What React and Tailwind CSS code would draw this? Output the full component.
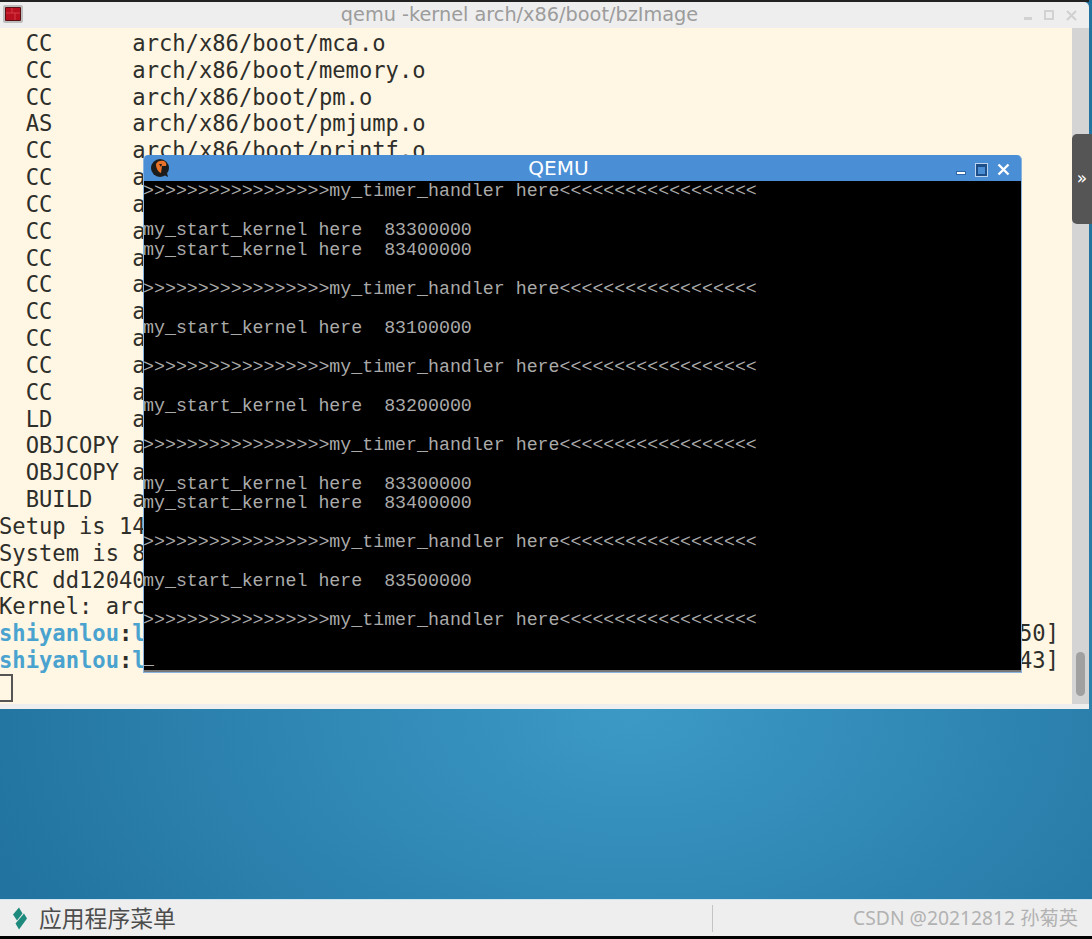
const T = ">".repeat(17) + "my_timer_handler here" + "<".repeat(18);
const S = (n) => "my_start_kernel here  " + n;
const qemuLines = [T,"",S(83300000),S(83400000),"",T,"",S(83100000),"",T,"",S(83200000),"",T,"",S(83300000),S(83400000),"",T,"",S(83500000),"",T,"","_"];

const termLines = [
  "  CC      arch/x86/boot/mca.o",
  "  CC      arch/x86/boot/memory.o",
  "  CC      arch/x86/boot/pm.o",
  "  AS      arch/x86/boot/pmjump.o",
  "  CC      arch/x86/boot/printf.o",
  "  CC      arch/x86/boot/regs.o",
  "  CC      arch/x86/boot/string.o",
  "  CC      arch/x86/boot/tty.o",
  "  CC      arch/x86/boot/video.o",
  "  CC      arch/x86/boot/video-mode.o",
  "  CC      arch/x86/boot/version.o",
  "  CC      arch/x86/boot/video-vga.o",
  "  CC      arch/x86/boot/video-vesa.o",
  "  CC      arch/x86/boot/video-bios.o",
  "  LD      arch/x86/boot/setup.elf",
  "  OBJCOPY arch/x86/boot/setup.bin",
  "  OBJCOPY arch/x86/boot/vmlinux.bin",
  "  BUILD   arch/x86/boot/bzImage",
  "Setup is 14364 bytes (padded to 14848 bytes).",
  "System is 8 kB",
  "CRC dd120400",
  "Kernel: arch/x86/boot/bzImage is ready",
];

function Prompt({ end }) {
  return (
    <div className="flex justify-between h-[26.83px] pr-[13px]">
      <span><span className="font-bold text-[#4aa3cf]">shiyanlou</span><span className="font-bold">:</span><span className="font-bold text-[#4aa3cf]">l</span></span>
      <span>{end}</span>
    </div>
  );
}

export default function App() {
  return (
    <div className="relative w-[1092px] h-[939px] overflow-hidden flex flex-col bg-[radial-gradient(ellipse_680px_420px_at_58%_76%,#3c99c6,#22739f)]">
      <div className="h-[2px] bg-[#222] w-[1089px]" />
      <div className="w-[1089px] h-[707px] flex flex-col bg-[#eeeeee] rounded-tr-[5px] shrink-0">
        <div className="h-[26px] flex items-center relative shrink-0 justify-center pr-[50px] text-[19.3px] text-[#9c9c9c] font-['DejaVu_Sans',sans-serif]">
          <svg className="absolute left-[3px] top-[3px]" width="20" height="18" viewBox="0 0 20 18">
            <rect x="0" y="0" width="20" height="18" rx="2" fill="#bdbdbd" />
            <rect x="2" y="2" width="16" height="14" rx="1" fill="#5a1014" />
            <rect x="3" y="3" width="14" height="12" fill="#b8101e" />
            <path d="M3 8h14M9 3v5M12 8v7" stroke="#d83a46" strokeWidth="1" />
          </svg>
          <span>qemu -kernel arch/x86/boot/bzImage</span>
          <div className="absolute right-[12px] top-[8px] flex items-end gap-[12px]">
            <div className="w-[8px] h-[3px] bg-[#d2d2d2] mb-[1px]" />
            <div className="w-[10px] h-[10px] border-2 border-[#d2d2d2] mb-[1px]" />
            <svg width="11" height="11" viewBox="0 0 11 11"><path d="M1 1l9 9M10 1l-9 9" stroke="#d0d0d0" strokeWidth="2" /></svg>
          </div>
        </div>
        <div className="flex-1 flex min-h-0">
          <div className="flex-1 bg-[#fff6e4] overflow-hidden">
            <div className="-ml-[1px] pt-[2px] text-[#2e2e2a] text-[22.15px] leading-[26.83px] font-['DejaVu_Sans_Mono',monospace] whitespace-pre">
              {termLines.map((l, i) => <div key={i} className="h-[26.83px]">{l}</div>)}
              <Prompt end="50]" />
              <Prompt end="43]" />
              <div className="ml-[1px] w-[13px] h-[28px] border-2 border-l-0 border-[#555]" />
            </div>
          </div>
          <div className="w-[17px] bg-[#d4d4d4] flex flex-col justify-end items-center pb-[8px] shrink-0">
            <div className="w-[9px] h-[44px] rounded-full bg-[#a0a0a0]" />
          </div>
        </div>
        <div className="h-[5px] shrink-0" />
      </div>
      <div className="flex-1" />
      <div className="h-[37px] shrink-0 bg-[#eeeeee] border-t border-[#cfe6f2] flex items-center pl-[12px] pr-[14px]">
        <svg width="16" height="24" viewBox="0 0 16 24" className="shrink-0">
          <path d="M7 1.500L1 8.500l4 6L10.500 7.500z" fill="#1d8a7d" />
          <path d="M12 7.500L15 12.500 7 23.500 3.500 17.500z" fill="#1d8a7d" />
        </svg>
        <span className="ml-[11px] text-[22.8px] text-[#4d4d4d] font-['Noto_Sans_CJK_SC',sans-serif]">应用程序菜单</span>
        <div className="ml-[536px] w-[1px] h-[27px] bg-[#c4c4c4]" />
        <span className="ml-auto text-[19.3px] text-[#b2b2b2] font-['Noto_Sans','Noto_Sans_CJK_SC',sans-serif]">CSDN @20212812 孙菊英</span>
      </div>
      <div className="h-[3px] bg-black shrink-0" />

      <div className="absolute left-[143px] top-[155px] w-[879px] h-[518px] flex flex-col rounded-t-[5px] bg-[#4a8ed6] border border-[#8ab4e0] border-t-0">
        <div className="h-[26px] relative flex items-center justify-center pr-[48px] shrink-0 text-white text-[20px] font-['DejaVu_Sans',sans-serif]">
          <svg className="absolute left-[6px] top-[3px]" width="20" height="20" viewBox="0 0 20 20">
            <circle cx="10" cy="10" r="9" fill="#1c1c1c" />
            <path d="M14 17l4 2-1-4z" fill="#1c1c1c" />
            <path d="M6 6c1-3 5-4 8-3 2 1 3 3 2 5l-4 0-1 7c-3-1-5-5-5-9z" fill="#e8722a" />
            <path d="M9 6l3 0-1 3z" fill="#1c1c1c" />
          </svg>
          <span>QEMU</span>
          <div className="absolute right-[11px] top-[8px] flex items-end gap-[10px]">
            <div className="w-[10px] h-[4px] bg-white border border-[#2f66a8] mb-[1px]" />
            <div className="w-[11px] h-[12px] border-2 border-t-[3px] border-[#1f4f88] bg-[#4a8ed6] outline outline-[#bcd4ee]" />
            <svg width="13" height="13" viewBox="0 0 13 13"><path d="M1.500 1.500l10 10M11.500 1.500l-10 10" stroke="#fff" strokeWidth="2.400" /></svg>
          </div>
        </div>
        <div className="flex-1 bg-black pt-[1px] overflow-hidden border-b-2 border-[#777]">
          <div className="-ml-[1px] text-[#aaaaaa] text-[18.28px] leading-[19.52px] font-['Liberation_Mono',monospace] whitespace-pre">
            {qemuLines.map((l, i) => <div key={i} className="h-[19.52px]">{l}</div>)}
          </div>
        </div>
      </div>

      <div className="absolute left-[1072px] top-[134px] w-[20px] h-[90px] rounded-l-[5px] bg-[#555555] flex items-center justify-center text-white text-[17px] font-['DejaVu_Sans',sans-serif]">»</div>
    </div>
  );
}
